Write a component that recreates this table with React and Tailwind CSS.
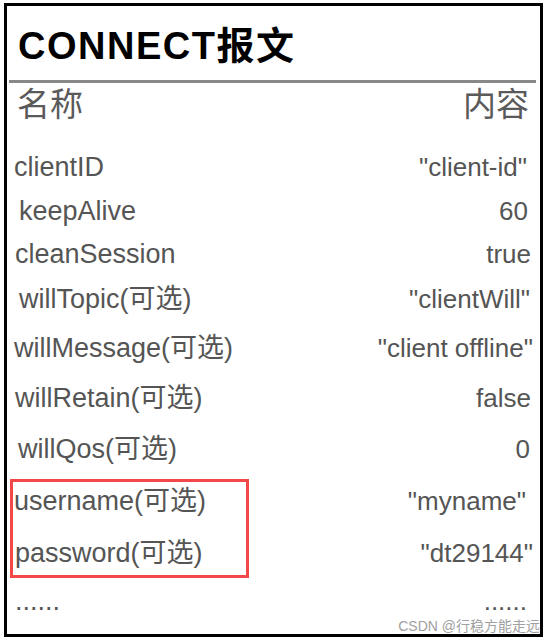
import React from "react";

const rows = [
  { k: "clientID", v: "\"client-id\"", h: "h-[44px]", pl: "pl-[7px]", pr: "pr-[13px]" },
  { k: "keepAlive", v: "60", h: "h-[44px]", pl: "pl-[12px]", pr: "pr-[12px]" },
  { k: "cleanSession", v: "true", h: "h-[43px]", pl: "pl-[8px]", pr: "pr-[9px]" },
  { k: "willTopic(可选)", v: "\"clientWill\"", h: "h-[47px]", pl: "pl-[12px]", pr: "pr-[10px]" },
  { k: "willMessage(可选)", v: "\"client offline\"", h: "h-[50px]", pl: "pl-[7px]", pr: "pr-[7px]" },
  { k: "willRetain(可选)", v: "false", h: "h-[50px]", pl: "pl-[8px]", pr: "pr-[9px]" },
  { k: "willQos(可选)", v: "0", h: "h-[52px]", pl: "pl-[11px]", pr: "pr-[10px]" },
  { k: "username(可选)", v: "\"myname\"", h: "h-[52px]", pl: "pl-[7px]", pr: "pr-[14px]" },
  { k: "password(可选)", v: "\"dt29144\"", h: "h-[52px]", pl: "pl-[8px]", pr: "pr-[7px]" },
  { k: "......", v: "......", h: "h-[44px]", pl: "pl-[8px]", pr: "pr-[13px]" },
];

export default function App() {
  return (
    <div
      className="w-[549px] h-[640px] bg-white pt-[3px] pl-[4px]"
      style={{ fontFamily: '"Liberation Sans", "Noto Sans CJK SC", sans-serif' }}
    >
      <div className="relative w-[539px] h-[634px] border-[3px] border-black flex flex-col">
        <div className="h-[74px] pt-[6px] pl-[11px] flex items-center text-[38px] font-bold text-black tracking-[1.5px] leading-none">
          CONNECT报文
        </div>
        <div className="ml-[2px] w-[527px] h-[3px] bg-[#888888]" />
        <div className="h-[42px] flex items-center justify-between pl-[10px] pr-[11px] text-[33px] text-[#5a5a5a] leading-none">
          <span>名称</span>
          <span>内容</span>
        </div>
        <div className="h-[20px]" />
        {rows.map((r, i) => (
          <div
            key={i}
            className={`${r.h} ${r.pl} ${r.pr} flex items-center justify-between text-[#555555]`}
          >
            <span className="text-[27px]">{r.k}</span>
            <span className="text-[26px]">{r.v}</span>
          </div>
        ))}
        <div className="absolute left-[3px] top-[473px] w-[239px] h-[99px] border-[3px] border-[#f24848]" />
        <div className="absolute right-0 bottom-0 text-[14px] leading-[16px] text-[#a0a0a0]">
          CSDN @行稳方能走远
        </div>
      </div>
    </div>
  );
}
